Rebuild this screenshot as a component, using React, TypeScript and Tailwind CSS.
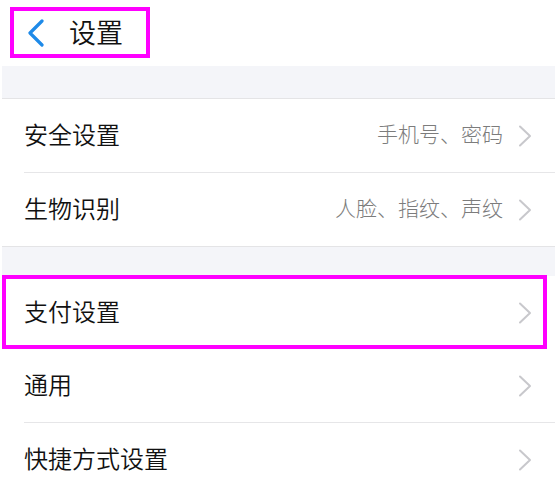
import React from 'react';

type Item = { label: string; value?: string };

const Chevron: React.FC = () => (
  <svg width="14" height="22" viewBox="0 0 14 22" className="shrink-0">
    <path d="M2 1.5 L12 11 L2 20.5" fill="none" stroke="#c8c8cc" strokeWidth="2" strokeLinecap="round" strokeLinejoin="round" />
  </svg>
);

const Row: React.FC<{ item: Item; divider?: boolean; highlight?: boolean }> = ({ item, divider, highlight }) => (
  <div className="relative bg-white">
    <div className="flex h-[73px] items-center pl-[22px] pr-[23px]">
      <span className="flex-1 pb-[4px] text-[24px] font-[350] text-[#111]">{item.label}</span>
      {item.value && <span className="mr-[15px] pb-[3px] text-[21px] font-light text-[#7c7c7c]">{item.value}</span>}
      <Chevron />
    </div>
    {divider && <div className="ml-[22px] h-px bg-[#e6e6e8]" />}
    {highlight && (
      <span className="pointer-events-none absolute left-0 right-[8px] -top-px bottom-0 border-[4px] border-[#ff00ff]" />
    )}
  </div>
);

const Band: React.FC<{ h: string }> = ({ h }) => (
  <div className={`${h} border-b border-[#e4e4e6] bg-[#f4f5f9]`} />
);

export default function App() {
  return (
    <div className="h-[482px] w-[557px] overflow-hidden bg-white pl-[2px] pr-[2px]" style={{ fontFamily: '"Noto Sans CJK SC", "Noto Sans", sans-serif' }}>
      <div className="h-[66px] pl-[8px] pt-[7px]">
        <div className="flex h-[51px] w-[140px] items-center border-[4px] border-[#ff00ff] pl-[12px]">
          <svg width="20" height="28" viewBox="0 0 20 28">
            <path d="M16 2 L4 14 L16 26" fill="none" stroke="#1e8ae8" strokeWidth="3.2" strokeLinecap="round" strokeLinejoin="round" />
          </svg>
          <span className="ml-[23px] pb-[2px] text-[27px] font-[350] leading-none text-[#111]">设置</span>
        </div>
      </div>
      <Band h="h-[33px]" />
      <Row item={{ label: '安全设置', value: '手机号、密码' }} divider />
      <div className="border-b border-[#e4e4e6]">
        <Row item={{ label: '生物识别', value: '人脸、指纹、声纹' }} />
      </div>
      <div className="h-[29px] bg-[#f4f5f9]" />
      <Row item={{ label: '支付设置' }} highlight />
      <Row item={{ label: '通用' }} divider />
      <Row item={{ label: '快捷方式设置' }} />
    </div>
  );
}
